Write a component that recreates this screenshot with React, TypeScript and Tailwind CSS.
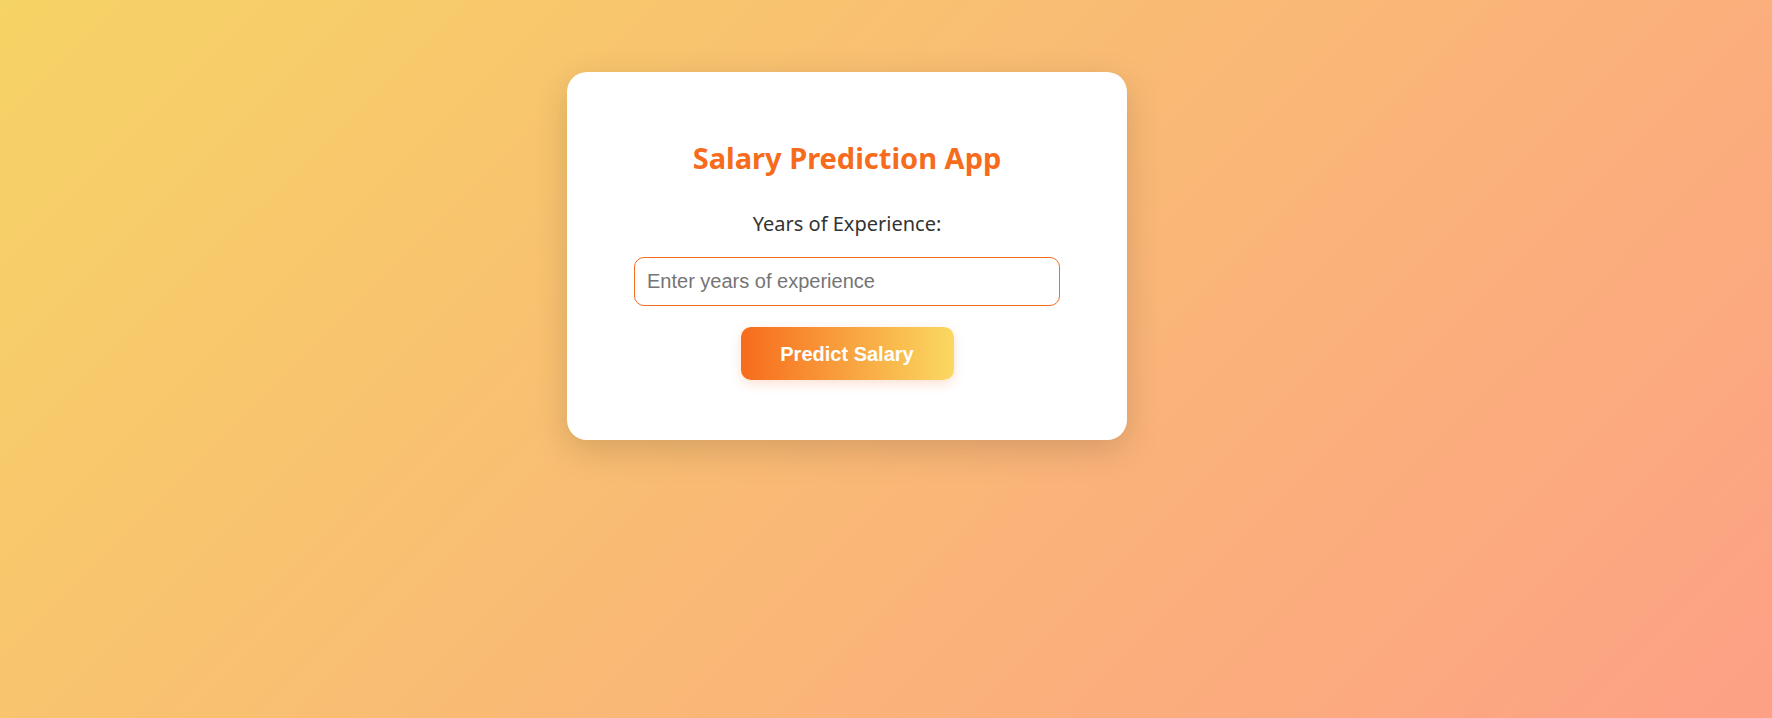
import React from "react";

export default function App() {
  return (
    <div className="w-[1772px] h-[718px] overflow-hidden bg-[linear-gradient(135deg,#f6d365_0%,#fda085_100%)] pt-[72px]">
      <div className="ml-[567px] w-[560px] h-[368px] bg-white rounded-[20px] shadow-[0_10px_35px_rgba(0,0,0,0.15)] flex flex-col items-center pt-[69px]">
        <h2 className="text-[29px] leading-[34px] font-bold text-[#f76b1c] font-['Noto_Sans',sans-serif]">
          Salary Prediction App
        </h2>
        <label className="mt-[37px] text-[20px] leading-[24px] text-[#333333] font-['Noto_Sans',sans-serif]">
          Years of Experience:
        </label>
        <input
          type="number"
          placeholder="Enter years of experience"
          className="mt-[21px] w-[426px] h-[49px] border border-[#f76b1c] rounded-[10px] px-[12px] text-[20px] font-['Liberation_Sans',Arial,sans-serif] placeholder:text-[#757575] outline-none"
        />
        <button className="mt-[21px] w-[213px] h-[53px] rounded-[10px] bg-[linear-gradient(to_right,#f76b1c,#fad961)] text-white text-[20px] font-bold font-['Liberation_Sans',Arial,sans-serif] shadow-[0_4px_12px_rgba(247,107,28,0.2)]">
          Predict Salary
        </button>
      </div>
    </div>
  );
}
